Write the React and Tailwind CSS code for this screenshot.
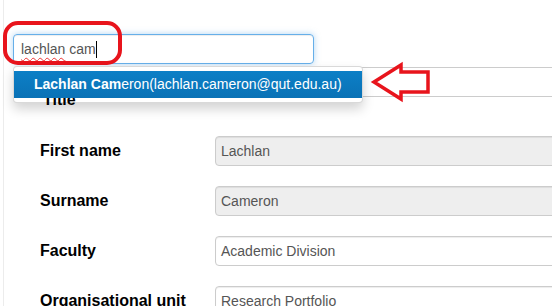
import React from "react";

const rows = [
    { label: "First name", value: "Lachlan", disabled: true },
    { label: "Surname", value: "Cameron", disabled: true },
    { label: "Faculty", value: "Academic Division" },
    { label: "Organisational unit", value: "Research Portfolio" }
];

const Field = ({ value, disabled }) => (
    <div
        className={`shrink-0 w-[400px] h-[30px] flex items-center px-[5px] border border-[#ccc] rounded-[4px] text-[14px] text-[#555] shadow-[inset_0_1px_1px_rgba(0,0,0,0.075)] ${disabled ? "bg-[#eee]" : "bg-white"}`}
    >
        {value}
    </div>
);

const App = () => {
    return (
        <div className="relative w-[552px] h-[306px] overflow-hidden bg-white font-['Liberation_Sans',Arial,sans-serif]">
            <div className="ml-[3px] h-full border-l border-[#ececec] pl-[8px] pt-[34px]">

                {/* Search box */}
                <div className="ml-px w-[301px] h-[30px] flex items-center px-[7px] border border-[#66afe9] rounded-[4px] shadow-[inset_0_1px_1px_rgba(0,0,0,0.075),0_0_6px_rgba(102,175,233,0.5)] text-[14px] text-[#555]">
                    <span className="underline decoration-wavy decoration-[#e33] decoration-1 underline-offset-[3px]">lachlan</span>
                    <span className="whitespace-pre"> cam</span>
                    <span className="w-px h-[17px] bg-black"></span>
                </div>

                {/* Form */}
                <div className="mt-[3px] flex flex-col">
                    <div className="flex h-[69px]">
                        <div className="shrink-0 w-[203px] pl-[31px] pt-[24px] text-[16px] font-bold text-black relative z-20 leading-[18px]">
                            Title
                        </div>
                        <div className="shrink-0 w-[400px] h-[30px] border border-[#ccc] rounded-[4px] bg-white"></div>
                    </div>
                    {rows.map((row, index) => (
                        <div key={index} className="flex items-center h-[30px] mb-[20px]">
                            <div className="shrink-0 w-[203px] pl-[28px] text-[16px] font-bold text-black whitespace-nowrap">
                                {row.label}
                            </div>
                            <Field value={row.value} disabled={row.disabled} />
                        </div>
                    ))}
                </div>
            </div>

            {/* Red annotation around search box */}
            <div className="absolute left-[3px] top-[21px] w-[119px] h-[44px] border-[4px] border-[#e8141c] rounded-[15px]"></div>

            {/* Autocomplete dropdown */}
            <div className="absolute left-[13px] top-[66px] w-[350px] h-[37px] bg-white border border-[rgba(0,0,0,0.15)] rounded-[4px] shadow-[0_6px_12px_rgba(0,0,0,0.175)] pt-[4px]">
                <div className="relative z-30 h-[27px] flex items-center pl-[20px] text-[14px] text-white bg-gradient-to-b from-[#0c7fc6] to-[#0a72b6]">
                    <span className="font-bold">Lachlan Cam</span>
                    <span>eron(lachlan.cameron@qut.edu.au)</span>
                </div>
            </div>

            {/* Red arrow */}
            <svg className="absolute left-[368px] top-[60px]" width="66" height="44" viewBox="368 60 66 44">
                <polygon
                    points="374,82 401,65 401,72 428,72 428,92 401,92 401,99"
                    fill="white"
                    stroke="#e8141c"
                    strokeWidth="3.5"
                    strokeLinejoin="miter"
                />
            </svg>
        </div>
    );
};

export default App;
